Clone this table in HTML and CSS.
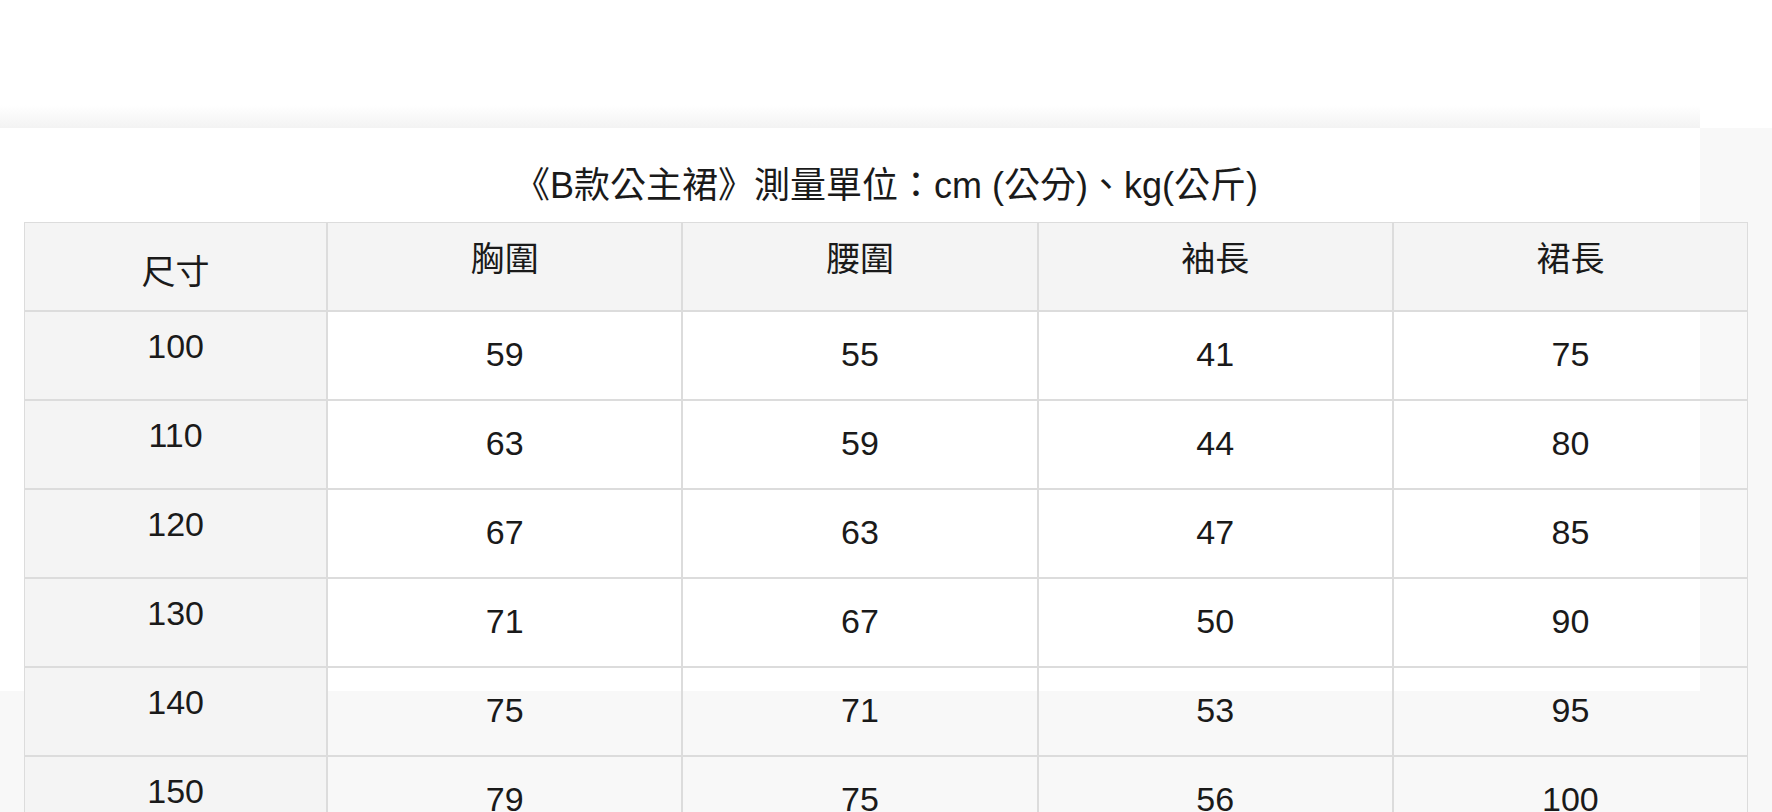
FILE: index.html
```html
<!DOCTYPE html>
<html lang="zh-Hant">
<head>
<meta charset="utf-8">
<title>B款公主裙 尺寸表</title>
<link rel="stylesheet" href="styles.css">
</head>
<body>
<div class="page">
  <div class="top"></div>
  <div class="band">
    <div class="fade"></div>
    <div class="band-rest"></div>
  </div>
  <div class="panel">
    <h1 class="title">《B款公主裙》測量單位：cm (公分)、kg(公斤)</h1>
    <table class="size-table">
      <colgroup>
        <col class="c-first">
        <col class="c-data">
        <col class="c-data">
        <col class="c-data">
        <col class="c-data">
      </colgroup>
      <thead>
        <tr>
          <th class="h-first">尺寸</th>
          <th>胸圍</th>
          <th>腰圍</th>
          <th>袖長</th>
          <th>裙長</th>
        </tr>
      </thead>
      <tbody>
        <tr><td class="d-first">100</td><td>59</td><td>55</td><td>41</td><td>75</td></tr>
        <tr><td class="d-first">110</td><td>63</td><td>59</td><td>44</td><td>80</td></tr>
        <tr><td class="d-first">120</td><td>67</td><td>63</td><td>47</td><td>85</td></tr>
        <tr><td class="d-first">130</td><td>71</td><td>67</td><td>50</td><td>90</td></tr>
        <tr><td class="d-first">140</td><td>75</td><td>71</td><td>53</td><td>95</td></tr>
        <tr><td class="d-first">150</td><td>79</td><td>75</td><td>56</td><td>100</td></tr>
      </tbody>
    </table>
  </div>
</div>
</body>
</html>
```

FILE: styles.css
```css
html, body {
  margin: 0;
  padding: 0;
}
body {
  background: #f8f8f8;
  font-family: "Liberation Sans", Arial, "Noto Sans CJK TC", sans-serif;
  color: #1a1a1a;
  overflow: hidden;
}
.page {
  width: 1772px;
  height: 812px;
  overflow: hidden;
}
.top {
  height: 105px;
  background: #fff;
}
.band {
  display: flex;
  height: 23px;
}
.fade {
  width: 1700px;
  background: linear-gradient(to bottom, #ffffff 0%, #f3f3f3 100%);
}
.band-rest {
  flex: 1;
  background: #fff;
}
.panel {
  width: 1700px;
  height: 563px;
  background: #fff;
  box-sizing: border-box;
  padding: 38px 0 0 24px;
}
.title {
  width: 1724px;
  margin: 0 0 16px;
  font-size: 36px;
  line-height: 40px;
  font-weight: normal;
  text-align: center;
  color: #1a1a1a;
  white-space: nowrap;
}
.size-table {
  width: 1724px;
  table-layout: fixed;
  border-collapse: separate;
  border-spacing: 0;
  font-size: 34px;
}
.c-first { width: 303px; }
.c-data { width: 355px; }
.size-table th,
.size-table td {
  height: 89px;
  box-sizing: border-box;
  border: 1px solid #dcdcdc;
  padding: 0 0 3px;
  text-align: center;
  vertical-align: middle;
  font-weight: normal;
  line-height: 40px;
  color: #1a1a1a;
}
.size-table th {
  background: #f4f4f4;
  padding-bottom: 15px;
}
.size-table th.h-first {
  padding-bottom: 0;
  padding-top: 11px;
}
.size-table td {
  background: transparent;
}
.size-table td.d-first {
  background: #f4f4f4;
  padding-bottom: 19px;
}
```
